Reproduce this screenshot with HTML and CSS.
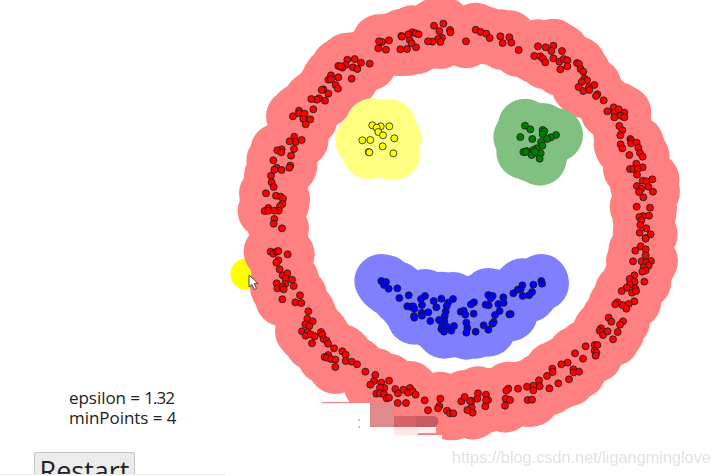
FILE: index.html
```html
<!DOCTYPE html>
<html lang="en">
<head>
<meta charset="utf-8">
<title>DBSCAN</title>
<link rel="stylesheet" href="styles.css">
</head>
<body>
<main class="page">
  <section class="controls">
    <p class="readout">epsilon = <span class="tight">1.32</span><br>minPoints = 4</p>
    <button class="restart" type="button">Restart</button>
  </section>
  <canvas class="plot" id="plot" width="489" height="476"></canvas>
</main>
<svg class="cursor" width="12" height="17" viewBox="0 0 12 17"><path d="M1 1V13L4 10.5L6.200 15.500L8.500 14.500L6.300 9.600H10.200Z" fill="#fff" stroke="#444" stroke-width="1"/></svg>
<div class="watermark">https://blog.csdn.net/ligangminglove</div>
<div class="bottom-panel"></div>
<script src="script.js"></script>
</body>
</html>
```
FILE: styles.css
```css
html, body { margin: 0; padding: 0; background: #fff; }
body { position: relative; width: 714px; height: 476px; overflow: hidden; font-family: "Open Sans", "Noto Sans", sans-serif; color: #222; }
.page { display: flex; width: 714px; height: 476px; }
.controls { flex: 0 0 225px; padding: 388px 0 0 34px; box-sizing: border-box; }
.readout { margin: 0 0 24px 35px; font-size: 17px; line-height: 20px; letter-spacing: -0.05px; white-space: nowrap; }
.tight { letter-spacing: -1px; }
.restart { display: block; width: 101px; height: 46px; padding: 0 0 13px; background: #ececec; border: 1px solid #c4c4c4; border-radius: 2px 2px 0 0; font: 27px/36px "Open Sans", "Noto Sans", sans-serif; color: #222; }
.plot { display: block; flex: 0 0 489px; width: 489px; height: 476px; filter: blur(0.35px); }
.cursor { position: absolute; left: 248px; top: 274px; }
.watermark { position: absolute; left: 452px; top: 447px; font: 16.3px/20px "Liberation Sans", sans-serif; color: #e2e2e2; white-space: nowrap; }
.bottom-panel { position: absolute; left: 0; top: 474px; width: 225px; height: 2px; background: #fff; border-top: 1px solid #eee; border-right: 1px solid #eee; border-radius: 0 2px 0 0; box-sizing: border-box; }
```
FILE: script.js
```js
var ctx = document.getElementById('plot').getContext('2d');
ctx.translate(-225, 0);

function map(ox, oy, list) {
  var out = [];
  for (var i = 0; i < list.length; i += 2) out.push([ox + list[i] / 3, oy + list[i + 1] / 3]);
  return out;
}

var red = [].concat(
  map(230, 0, [708,124,640,71,612,77,628,93,660,90,661,97,636,113,624,117,631,126,607,125,594,124,558,142,531,147,511,148,539,120,545,130,514,108,516,110,547,97,557,100,566,103,535,103,477,121,456,126,447,124,445,145,468,149,419,191,393,188,374,177,352,179,347,195,337,203,325,198,332,199,369,202,382,207,365,236,325,232,303,226,295,239,303,238,317,255,324,266,280,268,275,270,295,281,285,302,267,295,260,299,244,297,250,328,207,332,207,340,224,341,189,349,220,357,241,358,227,373,193,410,197,426,215,420,179,424,192,447,155,448,142,451,154,457,183,467,130,481,181,497,178,503,140,503,133,509,155,510,123,527,125,547,131,561,108,580,138,587,152,590,159,596,157,612,150,618,146,632,133,632,115,624,104,633,115,632,133,657,131,671,156,685]),
  map(470, 0, [17,89,32,96,49,101,59,114,91,109,98,129,118,112,124,128,146,150,204,139,227,142,250,137,244,153,276,153,193,168,211,169,219,176,226,187,250,175,268,185,281,177,292,181,292,199,271,208,321,189,327,192,332,207,340,215,343,236,351,241,335,246,373,255,326,261,340,273,357,261,358,270,382,283,378,288,401,301,412,334,431,322,433,338,433,352,446,328,463,338,453,347,463,352,448,378,457,391,451,406,452,433,457,445,481,417,484,422,483,430,500,428,505,443,510,459,518,470,478,465,499,491,518,502,480,507,490,507,503,507,501,524,518,542,529,544,547,538,535,560,501,558,514,566,507,576,549,575,520,592,500,620,540,623,519,648,537,647,508,651,514,661,511,675,529,685,509,698,542,703,527,714]),
  map(470, 236, [527,8,512,31,527,40,496,44,527,58,489,76,515,76,543,75,528,80,536,89,521,94,527,103,517,107,523,137,493,118,479,129,494,137,479,146,470,155,455,165,486,170,496,158,498,165,493,196,476,204,457,207,442,199,436,205,469,218,416,245,424,257,459,256,450,266,393,277,389,284,398,286,399,297,413,286,443,288,429,310,374,327,382,327,374,344,379,350,377,359,347,331,315,352,339,368,293,380,274,385,247,398,248,408,231,420,310,400,311,409,327,407,297,430,265,442,238,457,207,433,209,451,190,449,171,452,190,463,144,458,115,458,109,464,107,488,120,492,105,509,173,492,186,491,48,476,54,492,48,493,46,511,24,472,22,488,5,495,5,514,8,530]),
  map(230, 236, [122,47,130,53,140,47,145,45,173,55,145,73,139,80,149,100,158,118,172,112,186,131,167,128,191,150,166,144,140,142,142,157,157,153,161,160,157,190,210,178,196,199,214,201,235,226,232,248,248,256,226,265,238,270,216,286,232,288,227,299,242,295,254,301,246,322,273,288,277,296,281,309,290,314,294,323,312,337,337,346,347,356,295,357,284,363,291,365,303,369,316,371,347,375,365,377,381,385,316,393,406,407,436,417,432,435,421,446,454,440,477,434,463,456,450,455,439,473,449,472,462,475,470,487,477,485,496,459,504,472,520,461,540,456,534,470,548,466,557,476,503,501,528,501,584,493,631,488,594,523,628,510,624,517,651,524,660,532,670,532,694,496,704,483,712,522,720,495])
);
var blue = [].concat(
  map(230, 236, [454,135,468,138,462,147,476,158,502,157,508,186,536,178,585,180,573,189,634,188,611,195,669,189,654,200,650,211,576,207,532,211,541,212,549,211,553,218,619,214,595,229,575,230,576,239,552,240,553,245,647,227,644,241,627,252,601,255,643,256,637,268,651,272,672,270,634,279,642,287,664,284,692,227,701,224,706,236,709,260,712,276,709,290]),
  map(470, 236, [214,135,216,143,190,146,157,148,152,160,143,161,130,172,158,180,177,178,186,168,100,184,101,201,85,204,68,180,55,177,62,187,56,208,47,206,12,199,3,205,11,233,89,225,75,237,71,258,67,263,41,268,55,281,17,287,118,235,122,234])
);
var yellow = map(230, 0, [427,376,452,379,478,379,440,383,445,396,459,406,493,415,397,421,421,420,458,439,416,456,418,457,490,460]);
var green = map(470, 0, [165,377,181,388,218,390,223,394,218,403,258,405,243,412,231,417,151,411,187,417,213,426,217,437,200,445,190,450,170,453,160,456,168,456,185,465,205,462,212,460,209,476,195,455]);

function disc(x, y, r) { ctx.beginPath(); ctx.arc(x, y, r, 0, Math.PI * 2); ctx.fill(); }
function halo(list, color, r) {
  ctx.fillStyle = color;
  list.forEach(function (p) { disc(p[0], p[1], r); });
}
function dots(list, color) {
  ctx.fillStyle = color;
  ctx.strokeStyle = '#1a1a1a';
  ctx.lineWidth = 0.8;
  list.forEach(function (p) {
    ctx.beginPath(); ctx.arc(p[0], p[1], 3.500, 0, Math.PI * 2); ctx.fill(); ctx.stroke();
  });
}
function rect(color, x, y, w, h) { ctx.fillStyle = color; ctx.fillRect(x, y, w, h); }

ctx.fillStyle = '#ffff00';
disc(246, 274, 15.500);
halo(red, '#ff8080', 27);
halo(blue, '#8080ff', 27);
halo(yellow, '#ffff80', 27);
halo(green, '#80c080', 27);
dots(red, '#ff0000');
dots(blue, '#0000ff');
dots(yellow, '#ffff00');
dots(green, '#008000');

// Compression patches left in the photographed canvas
rect('#ffffff', 322, 403, 48, 73);
rect('#ff8080', 322, 402, 48, 1);
rect('#ffffff', 370, 427, 24, 49);
rect('#ffffff', 394, 435, 48, 41);
rect('#e08a8c', 370, 403, 24, 24);
rect('#d4636a', 394, 416, 22, 11);
rect('#c95a62', 416, 416, 15, 11);
ctx.fillStyle = '#c95a62';
disc(431, 421.500, 5.500);
disc(433, 421.500, 5.500);
rect('#fde6e6', 394, 427, 24, 8);
rect('#fff0f0', 418, 427, 18, 6);
rect('#c8c8c8', 358, 419, 2, 2);
rect('#c8c8c8', 358, 426, 2, 2);
```
